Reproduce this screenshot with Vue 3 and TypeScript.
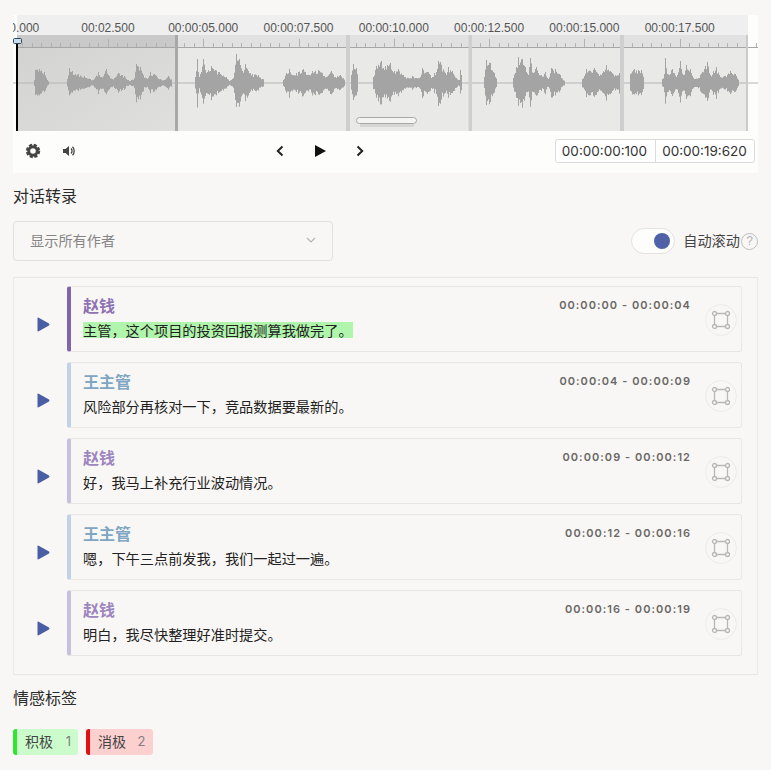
<template>
  <div class="page">
    <section class="player">
      <svg class="wave" viewBox="13 15 745 116" width="745" height="116">
        <defs>
          <linearGradient id="selGrad" x1="0" y1="0" x2="1" y2="1">
            <stop offset="0" stop-color="#d2d2d0" />
            <stop offset="1" stop-color="#dfdfdd" />
          </linearGradient>
        </defs>
        <rect x="17" y="15" width="731" height="20" fill="#efefef" />
        <rect x="17" y="35" width="730" height="96" fill="#e9e9e8" />
        <rect x="17" y="35" width="730" height="12" fill="#e1e1e2" />
        <rect x="17" y="35" width="159" height="96" fill="url(#selGrad)" />
        <rect x="17" y="35" width="159" height="12" fill="#c9c9c9" />
        <text
          v-for="l in labels"
          :key="l.x"
          class="tick-label"
          :x="l.x"
          y="32"
          text-anchor="middle"
        >{{ l.text }}</text>
        <path :d="tickPath" stroke="#b2b2b2" stroke-width="1" fill="none" />
        <line x1="17" y1="47.5" x2="758" y2="47.5" stroke="#a6a6a6" />
        <line x1="13" y1="83" x2="758" y2="83" stroke="#b5b5b5" stroke-width="1.2" />
        <path :d="wavePath" fill="#a4a4a4" />
        <rect
          v-for="s in separators"
          :key="s.x"
          :x="s.x"
          y="35"
          :width="s.w"
          height="96"
          :fill="s.c"
        />
        <rect x="356.5" y="117.5" width="60" height="6" rx="3" fill="#f4f4f3" stroke="#a8a8a8" />
        <rect x="360" y="124" width="54" height="3" fill="#d6d6d5" />
        <rect x="16" y="41" width="2" height="90" fill="#000" />
        <rect x="13.5" y="38.5" width="8" height="5" rx="1" fill="#c6dff0" stroke="#33465a" />
      </svg>
      <div class="controls">
        <div class="ctl-left">
          <svg width="16" height="16" viewBox="0 0 16 16">
            <circle cx="8" cy="8" r="4.3" fill="none" stroke="#444" stroke-width="3" />
            <circle cx="8" cy="8" r="6.2" fill="none" stroke="#444" stroke-width="2" stroke-dasharray="3.2 1.67" />
          </svg>
          <svg width="16" height="16" viewBox="0 0 16 16">
            <path d="M2 6h2.5L8 3v10L4.500 10H2z" fill="#444" />
            <path d="M10 5.500a3.500 3.500 0 0 1 0 5M11.500 3.800a6 6 0 0 1 0 8.400" fill="none" stroke="#444" stroke-width="1.300" />
          </svg>
        </div>
        <div class="ctl-mid">
          <svg width="12" height="14" viewBox="0 0 12 14">
            <path d="M8.500 2.500 3.800 7l4.700 4.500" fill="none" stroke="#222" stroke-width="2" />
          </svg>
          <svg width="14" height="14" viewBox="0 0 14 14">
            <path d="M2 1v12l11-6z" fill="#111" />
          </svg>
          <svg width="12" height="14" viewBox="0 0 12 14">
            <path d="M3.500 2.500 8.200 7l-4.700 4.500" fill="none" stroke="#222" stroke-width="2" />
          </svg>
        </div>
        <div class="clock">
          <span>00:00:00:100</span>
          <span>00:00:19:620</span>
        </div>
      </div>
    </section>

    <h3 class="title">对话转录</h3>
    <div class="filters">
      <div class="select">
        <span>显示所有作者</span>
        <svg width="10" height="6" viewBox="0 0 10 6">
          <path d="M1 1l4 4 4-4" fill="none" stroke="#b5b5b5" stroke-width="1.200" />
        </svg>
      </div>
      <div class="auto">
        <div class="toggle"><i></i></div>
        <span class="auto-label">自动滚动</span>
        <span class="help">?</span>
      </div>
    </div>

    <div class="list">
      <div v-for="row in rows" :key="row.time" class="row">
        <div class="play">
          <svg width="13" height="15" viewBox="0 0 13 15">
            <path d="M0.500 1.500q0-1.300 1.200-.7l10.300 5.800q.9.900 0 1.800L1.700 14.200q-1.200.6-1.200-.7z" fill="#4a5ea6" />
          </svg>
        </div>
        <div class="card" :class="[row.who, { active: row.active }]">
          <div class="card-main">
            <div class="card-head">
              <span class="name">{{ row.name }}</span>
              <span class="time">{{ row.time }}</span>
            </div>
            <p class="text"><span :class="{ hl: row.active }">{{ row.text }}</span></p>
          </div>
          <div class="mark">
            <svg width="20" height="20" viewBox="0 0 20 20">
              <path d="M4 3.500h12M3.500 4v12M16.500 4v12M4 16.500h12" fill="none" stroke="#b9b7b6" stroke-width="1.300" />
              <g fill="#f9f7f5" stroke="#b9b7b6" stroke-width="1.300">
                <circle cx="3.500" cy="3.500" r="2" />
                <circle cx="16.500" cy="3.500" r="2" />
                <circle cx="3.500" cy="16.500" r="2" />
                <circle cx="16.500" cy="16.500" r="2" />
              </g>
            </svg>
          </div>
        </div>
      </div>
    </div>

    <h3 class="title emo">情感标签</h3>
    <div class="chips">
      <div class="chip good"><span>积极</span><em>1</em></div>
      <div class="chip bad"><span>消极</span><em>2</em></div>
    </div>
  </div>
</template>

<script setup lang="ts">
interface Row {
  who: 'zhao' | 'wang';
  name: string;
  time: string;
  text: string;
  active?: boolean;
}

const rows: Row[] = [
  { who: 'zhao', name: '赵钱', time: '00:00:00 - 00:00:04', text: '主管，这个项目的投资回报测算我做完了。', active: true },
  { who: 'wang', name: '王主管', time: '00:00:04 - 00:00:09', text: '风险部分再核对一下，竞品数据要最新的。' },
  { who: 'zhao', name: '赵钱', time: '00:00:09 - 00:00:12', text: '好，我马上补充行业波动情况。' },
  { who: 'wang', name: '王主管', time: '00:00:12 - 00:00:16', text: '嗯，下午三点前发我，我们一起过一遍。' },
  { who: 'zhao', name: '赵钱', time: '00:00:16 - 00:00:19', text: '明白，我尽快整理好准时提交。' },
];

const STEP = 95.3;
const labelTexts = [
  '00:00.000',
  '00:02.500',
  '00:00:05.000',
  '00:00:07.500',
  '00:00:10.000',
  '00:00:12.500',
  '00:00:15.000',
  '00:00:17.500',
];
const labels = labelTexts.map((text, i) => ({ text, x: 12.6 + STEP * i }));

const separators = [
  { x: 175, w: 3, c: '#a9a9a9' },
  { x: 346, w: 4, c: '#cfcfcf' },
  { x: 468.500, w: 3.500, c: '#cfcfcf' },
  { x: 620, w: 4, c: '#cfcfcf' },
  { x: 746, w: 2, c: '#cbcbcb' },
];

let ticks = '';
for (let i = 1; i < 79; i++) {
  const x = Math.round(12.6 + (STEP / 10) * i) + 0.5;
  ticks += `M${x} ${i % 10 === 0 ? 39 : 43}V47`;
}
const tickPath = ticks;

// [x, amplitude] envelope points for each speech burst
const blobs: [number, number][][] = [
  [[34, 3], [35, 13], [39, 14], [44, 11], [46, 5], [49, 1]],
  [[67, 4], [69, 15], [72, 12], [78, 9], [84, 7], [90, 4], [93, 3], [98, 11], [101, 6], [106, 14], [108, 8], [112, 4], [118, 10], [124, 7], [129, 2], [134, 5], [136, 19], [140, 16], [143, 8], [147, 4], [150, 11], [154, 9], [160, 4], [164, 3], [168, 7], [172, 3]],
  [[195, 6], [197, 24], [199, 6], [203, 24], [206, 10], [211, 17], [215, 13], [219, 11], [226, 6], [229, 2], [233, 5], [236, 29], [239, 24], [242, 12], [245, 19], [248, 12], [252, 9], [258, 8], [264, 3]],
  [[283, 3], [286, 10], [289, 14], [292, 8], [298, 11], [303, 14], [309, 8], [312, 12], [318, 13], [322, 10], [326, 6], [331, 12], [335, 6], [340, 8], [345, 3]],
  [[351, 8], [353, 19], [356, 15], [358, 4]],
  [[373, 6], [376, 17], [381, 22], [385, 17], [390, 20], [394, 12], [398, 14], [403, 8], [408, 5], [412, 7], [416, 5], [420, 6], [422, 15], [428, 11], [432, 6], [434, 10], [437, 14], [438, 22], [440, 21], [446, 8], [448, 16], [452, 12], [456, 5], [459, 3], [460, 13], [462, 3]],
  [[484, 6], [486, 23], [490, 20], [494, 10], [497, 2]],
  [[513, 5], [516, 16], [518, 26], [522, 24], [525, 16], [528, 8], [530, 25], [533, 10], [536, 16], [541, 8], [545, 11], [548, 4], [551, 15], [555, 14], [560, 8], [565, 1]],
  [[582, 4], [586, 14], [590, 12], [594, 15], [598, 9], [602, 10], [606, 18], [610, 12], [615, 8], [619, 10], [622, 3]],
  [[630, 9], [634, 14], [638, 13], [641, 13], [644, 5]],
  [[662, 4], [664, 9], [665, 25], [667, 9], [672, 14], [676, 6], [680, 22], [683, 8], [686, 18], [690, 14], [694, 4], [698, 5], [707, 21], [710, 8], [716, 16], [720, 6], [724, 7], [730, 12], [735, 9], [739, 2]],
];

function noise(x: number): number {
  const v = Math.sin(x * 12.9898) * 43758.5453;
  return v - Math.floor(v);
}

function buildWave(): string {
  let d = '';
  for (const pts of blobs) {
    for (let k = 0; k < pts.length - 1; k++) {
      const [x0, a0] = pts[k];
      const [x1, a1] = pts[k + 1];
      for (let x = x0; x < x1; x++) {
        const t = (x - x0) / (x1 - x0);
        // envelope points keep their full height so the spikes stay visible
        const factor = x === x0 ? 1 : 0.68 + 0.32 * noise(x);
        const up = (a0 + (a1 - a0) * t) * factor;
        const down = up * (0.8 + 0.25 * noise(x + 7));
        d += `M${x} ${(83 - up).toFixed(1)}h1V${(83 + down).toFixed(1)}h-1z`;
      }
    }
  }
  return d;
}
const wavePath = buildWave();
</script>

<style scoped>
.page {
  width: 771px;
  height: 770px;
  box-sizing: border-box;
  padding: 15px 13px 0;
  overflow: hidden;
  background: #f9f7f5;
  font-family: "Noto Sans CJK SC", "Noto Sans", sans-serif;
  color: #333;
}

.player {
  width: 745px;
  background: #fdfdfc;
}

.wave {
  display: block;
}

.tick-label {
  font-family: "Liberation Sans", sans-serif;
  font-size: 12px;
  fill: #555;
}

.controls {
  height: 42px;
  display: grid;
  grid-template-columns: 249px auto 1fr;
  align-items: center;
  padding: 0 3px 3px 12px;
  box-sizing: border-box;
}

.ctl-left {
  display: flex;
  gap: 20px;
  align-items: center;
}

.ctl-left svg,
.ctl-mid svg {
  display: block;
}

.ctl-mid {
  display: flex;
  gap: 27px;
  align-items: center;
}

.clock {
  justify-self: end;
  display: flex;
  height: 24px;
  box-sizing: border-box;
  border: 1px solid #dcdcdc;
  border-radius: 3px;
  font-family: "Inter", sans-serif;
  font-size: 13.500px;
  line-height: 22px;
  color: #333;
  background: #fff;
}

.clock span {
  width: 99px;
  text-align: center;
  padding-right: 2px;
  box-sizing: border-box;
}

.clock span + span {
  padding-right: 1px;
  border-left: 1px solid #dcdcdc;
}

.title {
  margin: 10px 0 0;
  font-size: 16px;
  font-weight: 400;
  line-height: 24px;
  color: #2b2b2b;
}

.filters {
  margin-top: 14px;
  display: flex;
  justify-content: space-between;
  align-items: center;
}

.select {
  width: 320px;
  height: 40px;
  box-sizing: border-box;
  border: 1px solid #e2e0de;
  border-radius: 4px;
  padding: 0 16px 2px;
  display: flex;
  justify-content: space-between;
  align-items: center;
  font-size: 14.200px;
  color: #858585;
}

.auto {
  display: flex;
  align-items: center;
  font-size: 14.200px;
  color: #444;
}

.auto-label {
  padding-bottom: 2px;
}

.toggle {
  width: 44px;
  height: 26px;
  box-sizing: border-box;
  margin-right: 8px;
  border: 1px solid #e4e2df;
  border-radius: 13px;
  background: #fdfdfc;
  padding-right: 4px;
  display: flex;
  justify-content: flex-end;
  align-items: center;
}

.toggle i {
  width: 16px;
  height: 16px;
  border-radius: 50%;
  background: #4f62a8;
}

.help {
  width: 17px;
  height: 17px;
  box-sizing: border-box;
  margin-left: 1px;
  border: 1.300px solid #c0bebe;
  border-radius: 50%;
  font-family: "Liberation Sans", sans-serif;
  font-size: 12px;
  line-height: 15px;
  text-align: center;
  color: #b5b3b3;
}

.list {
  margin-top: 16px;
  height: 398px;
  box-sizing: border-box;
  border: 1px solid #e9e6e3;
  padding: 8px 15px 0 0;
  display: flex;
  flex-direction: column;
  gap: 10px;
}

.row {
  display: flex;
  align-items: stretch;
}

.play {
  width: 53px;
  display: flex;
  align-items: center;
  padding: 0 0 0 23px;
  box-sizing: border-box;
}

.play svg {
  display: block;
  margin-top: 10px;
}

.card {
  flex: 1;
  height: 66px;
  box-sizing: border-box;
  border: 1px solid #e9e6e3;
  border-left: 4px solid #c9bfe0;
  border-radius: 3px;
  padding: 0 4px 0 12px;
  display: flex;
  align-items: center;
}

.card-main {
  flex: 1;
}

.card-head {
  display: flex;
  justify-content: space-between;
  align-items: center;
  height: 24px;
  margin-top: -6px;
}

.name {
  font-size: 16px;
  font-weight: 700;
  line-height: 24px;
  color: #9d86bf;
}

.card.zhao.active {
  border-left-color: #7f66ab;
}

.card.active .name {
  color: #8e72b3;
}

.card.wang {
  border-left-color: #c0d2e4;
}

.card.wang .name {
  color: #7fa6c2;
}

.time {
  font-family: "Inter", sans-serif;
  font-size: 11px;
  font-weight: 600;
  letter-spacing: 1.050px;
  color: #6a6866;
  margin-right: -1px;
}

.text {
  margin: 3px 0 0;
  font-size: 14.200px;
  line-height: 20px;
  color: #222;
}

.hl {
  background: #b0f5ab;
  display: inline-block;
  line-height: 16px;
}

.mark {
  width: 32px;
  height: 32px;
  box-sizing: border-box;
  margin-left: 15px;
  margin-top: 2px;
  border: 1px solid #ecebe9;
  border-radius: 50%;
  display: flex;
  align-items: center;
  justify-content: center;
}

.emo {
  margin-top: 10px;
}

.chips {
  margin-top: 20px;
  display: flex;
  gap: 8px;
}

.chip {
  height: 26px;
  box-sizing: border-box;
  border-left: 4px solid;
  border-radius: 3px;
  padding: 0 0 2px 8px;
  display: flex;
  align-items: center;
  font-size: 14px;
  color: #444;
  white-space: nowrap;
}

.chip em {
  font-style: normal;
  margin-left: 11px;
  width: 9px;
  text-align: center;
  color: #7f7f7f;
  font-family: "Inter", sans-serif;
  font-size: 13px;
}

.chip.good {
  width: 65px;
  border-left-color: #2ee62e;
  background: #ccfccc;
}

.chip.bad {
  width: 67px;
  border-left-color: #e40e12;
  background: #fcd0cf;
}
</style>

<style>
html,
body {
  margin: 0;
  background: #f9f7f5;
}
</style>
